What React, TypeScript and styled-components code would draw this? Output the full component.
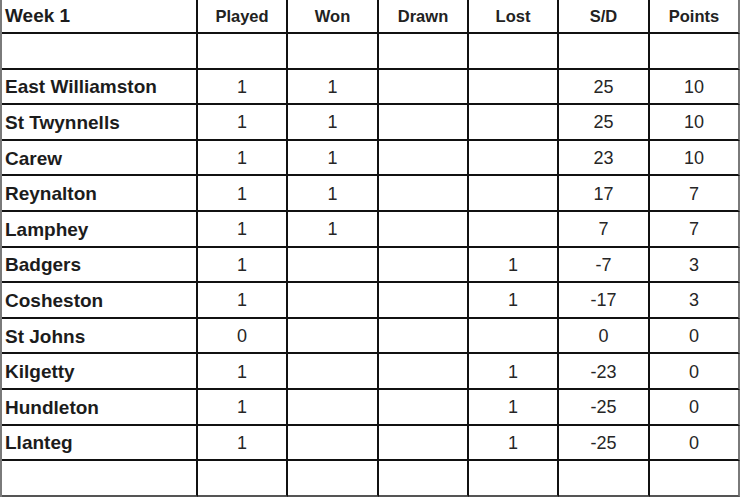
import React from "react";
import styled, { createGlobalStyle } from "styled-components";

const Global = createGlobalStyle`
  html, body { margin: 0; padding: 0; background: #ffffff; }
  body { font-family: "Liberation Sans", Arial, sans-serif; color: #1c1c1c; }
`;

const Board = styled.div`
  display: grid;
  grid-template-columns: 196px 90px 91px 90px 90px 91px 90px;
  grid-template-rows: 34px repeat(13, 35.6px);
  width: 740px;
  border-left: 2px solid #7a7a7a;
  box-sizing: content-box;
`;

const Cell = styled.div<{ $lastCol?: boolean; $lastRow?: boolean; $align?: "left" | "center" }>`
  box-sizing: border-box;
  display: flex;
  align-items: center;
  justify-content: ${(p) => (p.$align === "left" ? "flex-start" : "center")};
  padding-left: ${(p) => (p.$align === "left" ? "3px" : "0")};
  padding-top: 2px;
  border-right: 2px solid ${(p) => (p.$lastCol ? "#7a7a7a" : "#111")};
  border-bottom: 2px solid ${(p) => (p.$lastRow ? "#555" : "#111")};
  white-space: nowrap;
  overflow: hidden;
`;

const HeadCell = styled(Cell)`
  font-weight: 700;
  font-size: 16.5px;
  color: #222;
  padding-top: 0;
`;

const TitleCell = styled(Cell)`
  font-weight: 700;
  font-size: 19px;
  color: #1c1c1c;
  padding-top: 0;
`;

const NameCell = styled(Cell)`
  font-weight: 700;
  font-size: 19px;
  color: #1c1c1c;
`;

const NumCell = styled(Cell)`
  font-weight: 400;
  font-size: 18px;
  color: #262626;
`;

const headers = ["Played", "Won", "Drawn", "Lost", "S/D", "Points"];

type Row = { name: string; vals: (string | number)[] };

const rows: Row[] = [
  { name: "", vals: ["", "", "", "", "", ""] },
  { name: "East Williamston", vals: [1, 1, "", "", 25, 10] },
  { name: "St Twynnells", vals: [1, 1, "", "", 25, 10] },
  { name: "Carew", vals: [1, 1, "", "", 23, 10] },
  { name: "Reynalton", vals: [1, 1, "", "", 17, 7] },
  { name: "Lamphey", vals: [1, 1, "", "", 7, 7] },
  { name: "Badgers", vals: [1, "", "", 1, -7, 3] },
  { name: "Cosheston", vals: [1, "", "", 1, -17, 3] },
  { name: "St Johns", vals: [0, "", "", "", 0, 0] },
  { name: "Kilgetty", vals: [1, "", "", 1, -23, 0] },
  { name: "Hundleton", vals: [1, "", "", 1, -25, 0] },
  { name: "Llanteg", vals: [1, "", "", 1, -25, 0] },
  { name: "", vals: ["", "", "", "", "", ""] },
];

export default function App() {
  return (
    <>
      <Global />
      <Board>
        <TitleCell $align="left">Week 1</TitleCell>
        {headers.map((h, i) => (
          <HeadCell key={h} $lastCol={i === headers.length - 1}>
            {h}
          </HeadCell>
        ))}
        {rows.map((r, ri) => {
          const lastRow = ri === rows.length - 1;
          return (
            <React.Fragment key={ri}>
              <NameCell $align="left" $lastRow={lastRow}>
                {r.name}
              </NameCell>
              {r.vals.map((v, ci) => (
                <NumCell key={ci} $lastRow={lastRow} $lastCol={ci === r.vals.length - 1}>
                  {v === "" ? "" : String(v)}
                </NumCell>
              ))}
            </React.Fragment>
          );
        })}
      </Board>
    </>
  );
}
